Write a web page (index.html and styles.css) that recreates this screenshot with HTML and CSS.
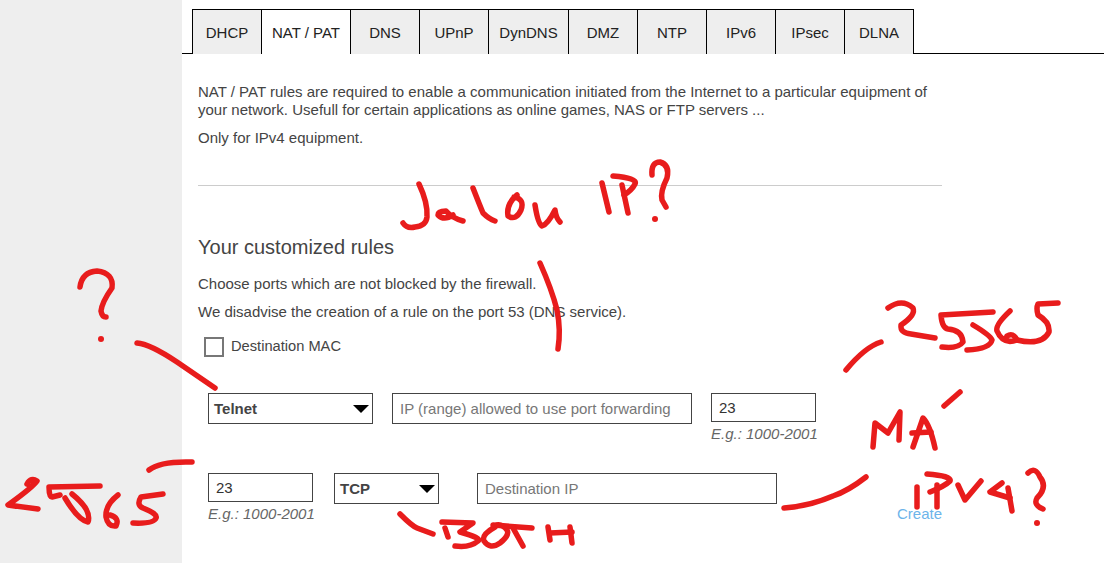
FILE: index.html
```html
<!DOCTYPE html>
<html lang="en">
<head>
<meta charset="utf-8">
<title>NAT / PAT</title>
<link rel="stylesheet" href="styles.css">
</head>
<body>
<div class="page">
  <aside class="side"></aside>
  <main class="main">
    <nav class="tabs">
      <a class="tab">DHCP</a>
      <a class="tab active tab-nat">NAT / PAT</a>
      <a class="tab">DNS</a>
      <a class="tab">UPnP</a>
      <a class="tab tab-dyn">DynDNS</a>
      <a class="tab">DMZ</a>
      <a class="tab">NTP</a>
      <a class="tab">IPv6</a>
      <a class="tab">IPsec</a>
      <a class="tab">DLNA</a>
    </nav>
    <section class="content">
      <p class="intro">NAT / PAT rules are required to enable a communication initiated from the Internet to a particular equipment of your network. Usefull for certain applications as online games, NAS or FTP servers ...</p>
      <p class="note">Only for IPv4 equipment.</p>
      <hr class="rule">
      <h2 class="heading">Your customized rules</h2>
      <p class="line">Choose ports which are not blocked by the firewall.</p>
      <p class="line second">We disadvise the creation of a rule on the port 53 (DNS service).</p>
      <label class="check"><span class="box"></span><span class="check-text">Destination MAC</span></label>
      <div class="row first-row">
        <div class="select wide"><span>Telnet</span></div>
        <div class="field ip"><input class="input" placeholder="IP (range) allowed to use port forwarding"></div>
        <div class="field port"><input class="input" value="23"><em class="hint">E.g.: 1000-2001</em></div>
      </div>
      <div class="row second-row">
        <div class="field port"><input class="input" value="23"><em class="hint">E.g.: 1000-2001</em></div>
        <div class="select narrow"><span>TCP</span></div>
        <div class="field ip dest"><input class="input" placeholder="Destination IP"></div>
      </div>
      <div class="actions"><a class="create">Create</a></div>
    </section>
  </main>
</div>
<svg class="ink" width="1104" height="563" viewBox="0 0 1104 563" aria-hidden="true">
  <g class="stroke">
    <!-- Jalou IP? -->
    <path d="M419 184Q428 203 427 217Q426 226 415 227Q407 229 403 223"/>
    <path d="M463 221Q452 218 446 211Q438 211 438 215Q444 221 453 215"/>
    <path d="M473 188Q480 206 483 213Q489 219 495 221"/>
    <path d="M517 195Q506 204 508 216Q516 221 521 210Q525 199 514 197"/>
    <path d="M535 205Q538 224 542 226Q548 224 555 210Q556 218 560 222"/>
    <path d="M602 183L609 212"/>
    <path d="M613 176Q638 178 635 184Q632 190 624 195"/>
    <path d="M622 185L628 213"/>
    <path d="M652 175Q651 162 660 162Q670 165 667 178Q660 192 662 200L666 207"/>
    <path d="M540 263Q552 290 557 310Q561 330 558 349"/>
    <!-- left ? and pointer -->
    <path d="M80 287Q82 272 97 271Q114 273 112 288Q102 302 101 311Q102 317 106 317"/>
    <path d="M137 343Q150 344 177 362L215 388"/>
    <path d="M149 470Q160 461 192 462"/>
    <!-- left 25565 -->
    <path d="M27 484Q31 477 37 481Q33 487 8 505Q22 507 38 509"/>
    <path d="M100 486L49 487Q49 497 52 497L60 495"/>
    <path d="M65 498Q78 520 88 522Q92 510 72 494"/>
    <path d="M118 495Q105 505 106 517Q108 527 116 526Q120 518 110 515"/>
    <path d="M163 494L141 497Q136 505 143 508Q158 514 156 518Q154 524 133 523"/>
    <!-- right 25565 -->
    <path d="M846 370Q865 347 881 342"/>
    <path d="M888 308Q902 298 913 308Q916 315 901 325Q900 333 911 334L935 338"/>
    <path d="M993 312L941 315Q942 328 948 329Q962 330 963 342Q958 349 942 347"/>
    <path d="M973 325Q990 335 992 340Q990 349 967 350"/>
    <path d="M1010 311Q995 325 997 331Q1003 345 1017 340Q1013 332 1007 336"/>
    <path d="M1017 340Q1042 346 1049 332Q1050 322 1038 315Q1036 308 1038 304L1058 303"/>
    <!-- MA -->
    <path d="M960 392L944 406"/>
    <path d="M873 447L875 423L888 433L900 412L899 440"/>
    <path d="M913 447L923 418Q930 425 935 448"/>
    <path d="M912 433L931 432"/>
    <path d="M866 477Q848 491 833 496Q810 506 784 508"/>
    <!-- IPv4? -->
    <path d="M917 487L917 507"/>
    <path d="M927 474Q952 476 950 481Q945 486 930 492"/>
    <path d="M937 485L937 507"/>
    <path d="M958 485L965 500L981 481"/>
    <path d="M1002 483L990 492L1010 498"/>
    <path d="M1008 488L1012 511"/>
    <path d="M1028 473Q1035 466 1040 477Q1048 487 1037 498Q1033 505 1043 509"/>
    <!-- BOTH -->
    <path d="M400 514Q412 526 417 528L433 534"/>
    <path d="M445 528L448 537"/>
    <path d="M442 522L473 523L460 532Q482 538 478 541Q470 548 455 546"/>
    <path d="M495 527Q481 535 484 541Q490 550 500 543Q510 535 507 530Q502 524 497 525"/>
    <path d="M493 525L532 528"/>
    <path d="M513 528L523 546"/>
    <path d="M548 527L550 540"/>
    <path d="M550 533L572 532"/>
    <path d="M570 527L572 543"/>
  </g>
  <g class="dots">
    <circle cx="101" cy="339" r="3"/>
    <circle cx="655" cy="219" r="3"/>
    <circle cx="1037" cy="523" r="3"/>
  </g>
</svg>
</body>
</html>
```

FILE: styles.css
```css
* { box-sizing: border-box; }
html, body { margin: 0; height: 100%; }
body {
  overflow: hidden;
  background: #fff;
  color: #444;
  font-family: "Liberation Sans", Arial, sans-serif;
  font-size: 15px;
}
.page { display: flex; height: 563px; }
.side { width: 182px; flex: none; background: #eee; }
.main { flex: 1; min-width: 0; }

.tabs {
  display: flex;
  height: 54px;
  padding: 9px 0 0 10px;
  border-bottom: 1px solid #000;
}
.tab {
  flex: none;
  width: 69px;
  height: 45px;
  padding-top: 1px;
  display: flex;
  align-items: center;
  justify-content: center;
  background: #eee;
  border: 1px solid #000;
  border-right: 0;
  border-bottom: 0;
  color: #222;
  font-size: 15px;
}
.tab-nat { width: 89px; }
.tab-dyn { width: 80px; }
.tab:last-child { border-right: 1px solid #000; width: 70px; }
.tab.active { background: #fff; }

.content { width: 760px; padding: 29px 0 0 16px; }
.intro { margin: 0; width: 740px; line-height: 18px; }
.note { margin: 10px 0 0; line-height: 18px; }
.rule { margin: 38px 0 0; width: 744px; border: 0; border-top: 1px solid #ccc; }
.heading { margin: 50px 0 0; font-size: 20px; font-weight: 400; line-height: 22px; color: #444; }
.line { margin: 16px 0 0; line-height: 19px; }
.line.second { margin-top: 9px; }
.check { display: flex; align-items: flex-start; gap: 7px; margin: 16px 0 0 6px; height: 20px; }
.check-text { font-size: 14.67px; line-height: 18px; }
.box {
  width: 20px;
  height: 20px;
  border: 2px solid #777;
  background: #fff;
}

.row { display: flex; padding-left: 10px; }
.first-row { margin-top: 36px; gap: 19px; height: 49px; }
.second-row { margin-top: 31px; height: 49px; }
.field { display: flex; flex-direction: column; }
.ip { width: 300px; }
.port { width: 105px; }
.dest { margin-left: 38px; }
.input {
  width: 100%;
  height: 31px;
  padding: 0 7px;
  border: 1px solid #444;
  border-radius: 0;
  outline: 0;
  background: #fff;
  color: #333;
  font: inherit;
}
.input::placeholder { color: #777; opacity: 1; }
.hint { margin-top: 4px; font-size: 15px; line-height: 16px; color: #666; white-space: nowrap; }
.select {
  position: relative;
  height: 31px;
  padding: 0 5px;
  display: flex;
  align-items: center;
  border: 1px solid #444;
  background: #fff;
  color: #444;
  font-weight: 700;
}
.select::after {
  content: "";
  position: absolute;
  right: 3px;
  top: 11px;
  border-style: solid;
  border-width: 8px 8px 0;
  border-color: #000 transparent transparent;
}
.wide { width: 165px; }
.narrow { width: 105px; margin-left: 21px; }
.actions { display: flex; justify-content: flex-end; width: 744px; margin-top: -18px; }
.create { color: #6cb4ea; line-height: 19px; }

.ink { position: absolute; left: 0; top: 0; pointer-events: none; }
.stroke { fill: none; stroke: #e81c1c; stroke-width: 5.5; stroke-linecap: round; stroke-linejoin: round; }
.dots { fill: #e81c1c; }
```
